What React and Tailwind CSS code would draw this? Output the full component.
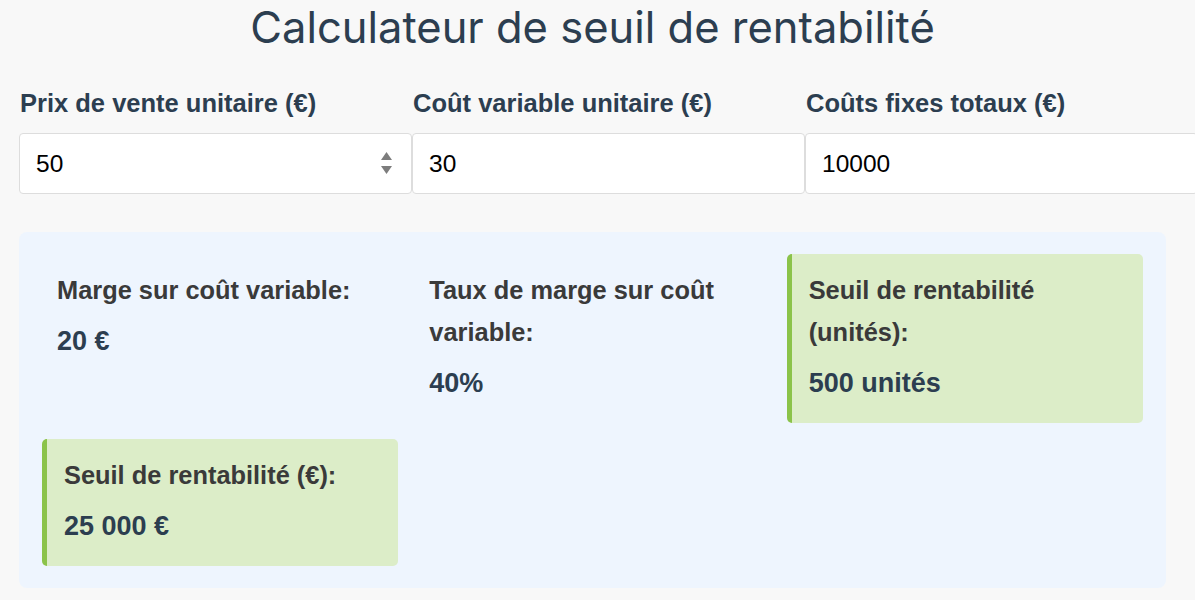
import { useState } from "react";

function Field({ label, value, onChange, spinner }) {
  return (
    <div className="flex flex-col w-[393px] shrink-0">
      <label className="h-[50px] pl-px text-[25.5px] leading-[50px] font-bold text-[#2c3e50]">{label}</label>
      <div className="relative mt-[5px]">
        <input
          type="text"
          value={value}
          className="w-full h-[61px] rounded-[4px] border border-[#dddddd] bg-white pl-[16px] text-[24.5px] text-black outline-none"
          onChange={e => onChange(e.target.value)}
        />
        {spinner && (
          <div className="absolute right-[19px] top-[18px] flex flex-col items-center gap-[4px]">
            <svg width="13" height="10" viewBox="0 0 13 10"><path d="M6.5 1 L12 9 L1 9 Z" fill="#7d7d7d" /></svg>
            <svg width="13" height="10" viewBox="0 0 13 10"><path d="M1 1 L12 1 L6.5 9 Z" fill="#7d7d7d" /></svg>
          </div>
        )}
      </div>
    </div>
  );
}

function Result({ label, value, highlight }) {
  return (
    <div className={
      highlight
        ? "rounded-[5px] border-l-[5px] border-[#8bc34a] bg-[#dcedc8] pl-[17px] pr-[15px] pt-[15px] pb-[18px]"
        : "pl-[15px] pr-[15px] pt-[15px] pb-[18px]"
    }>
      <div className="text-[25.4px] leading-[42px] font-bold text-[#3a3a3a]">{label}</div>
      <div className="mt-[8px] text-[27px] leading-[44px] font-bold text-[#2c3e50]">{value}</div>
    </div>
  );
}

export default function App() {
  const [price, setPrice] = useState("50");
  const [variable, setVariable] = useState("30");
  const [fixed, setFixed] = useState("10000");

  return (
    <div className="min-h-[600px] w-[1195px] overflow-hidden bg-[#f8f8f8] font-['Liberation_Sans',Arial,sans-serif]">
      <div className="w-[1147px] ml-[19px]">
        <h1 className="pt-[2px] h-[56px] text-center text-[43.5px] leading-[50px] font-['Inter',sans-serif] font-normal text-[#2c3e50]">
          Calculateur de seuil de rentabilité
        </h1>

        <div className="flex w-[1200px] mt-[22px]">
          <Field label="Prix de vente unitaire (€)" value={price} onChange={setPrice} spinner />
          <Field label="Coût variable unitaire (€)" value={variable} onChange={setVariable} />
          <Field label="Coûts fixes totaux (€)" value={fixed} onChange={setFixed} />
        </div>

        <div className="mt-[38px] rounded-[8px] bg-[#eef5fe] px-[23px] py-[22px]">
          <div className="grid grid-cols-3 gap-[16px]">
            <Result label="Marge sur coût variable:" value="20 €" />
            <Result label="Taux de marge sur coût variable:" value="40%" />
            <Result label="Seuil de rentabilité (unités):" value="500 unités" highlight />
            <Result label="Seuil de rentabilité (€):" value="25 000 €" highlight />
          </div>
        </div>
      </div>
    </div>
  );
}
